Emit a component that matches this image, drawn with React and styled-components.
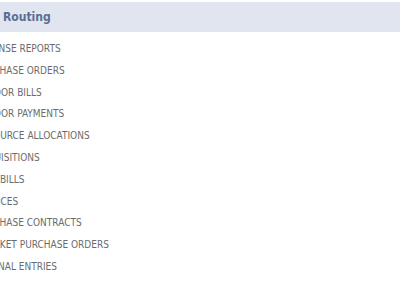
import React from 'react';
import styled, { createGlobalStyle } from 'styled-components';

const GlobalStyle = createGlobalStyle`
  html, body {
    margin: 0;
    padding: 0;
    background: #ffffff;
    overflow: hidden;
  }
`;

const Page = styled.div`
  width: 400px;
  height: 284px;
  overflow: hidden;
  padding-top: 2px;
  box-sizing: border-box;
  font-family: "DejaVu Sans Condensed", "DejaVu Sans", Verdana, sans-serif;
  font-stretch: condensed;
`;

const Section = styled.div`
  margin-left: -${(p) => p.$shift}px;
`;

const Header = styled.div`
  height: 30px;
  background: #e0e5ef;
  display: flex;
  align-items: center;
  padding-left: 3px;
  font-size: 12px;
  font-weight: bold;
  color: #5a6e95;
`;

const List = styled.ul`
  list-style: none;
  margin: 0;
  padding: 6px 0 0 0;
`;

const Item = styled.li`
  height: 21.8px;
  line-height: 21.8px;
  font-size: 10px;
  color: #6b6b6b;
  white-space: nowrap;
`;

const items = [
  'EXPENSE REPORTS',
  'PURCHASE ORDERS',
  'VENDOR BILLS',
  'VENDOR PAYMENTS',
  'RESOURCE ALLOCATIONS',
  'REQUISITIONS',
  'TIME BILLS',
  'INVOICES',
  'PURCHASE CONTRACTS',
  'BLANKET PURCHASE ORDERS',
  'JOURNAL ENTRIES',
];

export default function App() {
  return (
    <>
      <GlobalStyle />
      <Page>
        <Header>Routing</Header>
        <Section $shift={24.5}>
          <List>
            {items.map((label) => (
              <Item key={label}>{label}</Item>
            ))}
          </List>
        </Section>
      </Page>
    </>
  );
}
